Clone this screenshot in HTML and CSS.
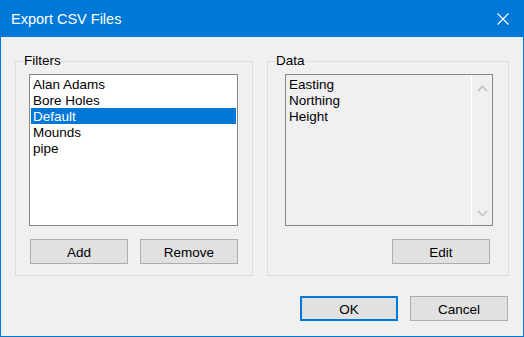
FILE: index.html
```html
<!DOCTYPE html>
<html lang="en">
<head>
    <meta charset="UTF-8">
    <title>Export CSV Files</title>
    <link rel="stylesheet" href="styles.css">
</head>
<body>
    <div class="dialog">
        <div class="titlebar">
            <span class="title">Export CSV Files</span>
            <span class="close">
                <svg width="12" height="12" viewBox="0 0 12 12">
                    <path d="M0.5 0.5 L11.5 11.5 M11.5 0.5 L0.5 11.5" stroke="#fff" stroke-width="1.1" fill="none"/>
                </svg>
            </span>
        </div>
        <div class="content">
            <div class="groups">
                <fieldset class="group filters">
                    <legend>Filters</legend>
                    <div class="group-body">
                        <ul class="listbox">
                            <li>Alan Adams</li>
                            <li>Bore Holes</li>
                            <li class="selected">Default</li>
                            <li>Mounds</li>
                            <li>pipe</li>
                        </ul>
                        <div class="group-buttons">
                            <button class="btn">Add</button>
                            <button class="btn">Remove</button>
                        </div>
                    </div>
                </fieldset>
                <fieldset class="group data">
                    <legend>Data</legend>
                    <div class="group-body">
                        <div class="listbox disabled">
                            <ul class="items">
                                <li>Easting</li>
                                <li>Northing</li>
                                <li>Height</li>
                            </ul>
                            <div class="scrollbar">
                                <svg width="11" height="7" viewBox="0 0 11 7">
                                    <path d="M1 6 L5.5 1.5 L10 6" stroke="#c0c0c0" stroke-width="1.6" fill="none"/>
                                </svg>
                                <svg width="11" height="7" viewBox="0 0 11 7">
                                    <path d="M1 1 L5.5 5.5 L10 1" stroke="#c0c0c0" stroke-width="1.6" fill="none"/>
                                </svg>
                            </div>
                        </div>
                        <div class="group-buttons end">
                            <button class="btn">Edit</button>
                        </div>
                    </div>
                </fieldset>
            </div>
            <div class="footer">
                <button class="btn default">OK</button>
                <button class="btn">Cancel</button>
            </div>
        </div>
    </div>
</body>
</html>
```

FILE: styles.css
```css
* {
    box-sizing: border-box;
}
body {
    margin: 0;
    background: #f0f0f0;
    font-family: 'Liberation Sans', Arial, sans-serif;
    font-size: 13.5px;
    color: #000;
}
.dialog {
    width: 524px;
    height: 337px;
    border: 1px solid #0078d7;
    border-top: none;
    background: #f0f0f0;
    display: flex;
    flex-direction: column;
}
.titlebar {
    height: 37px;
    background: #0078d7;
    color: #fff;
    display: flex;
    align-items: center;
    justify-content: space-between;
    padding: 1px 14px 0 10px;
}
.title {
    font-size: 14.5px;
}
.close {
    display: flex;
}
.content {
    flex: 1;
    display: flex;
    flex-direction: column;
    padding: 16px 14px 15px 14px;
}
.groups {
    display: flex;
    gap: 14px;
}
.group {
    margin: 0;
    min-width: 0;
    border: 1px solid #dcdcdc;
    padding: 5px 14px 11px 7px;
}
.group legend {
    padding: 0 1px;
    line-height: 16px;
}
.filters {
    width: 238px;
}
.filters .group-body {
    padding-left: 6px;
}
.data {
    width: 242px;
}
.data .group-body {
    padding-left: 10px;
}
.listbox {
    list-style: none;
    margin: 0;
    width: 209px;
    height: 152px;
    border: 1px solid #828790;
    background: #fff;
    padding: 1px;
}
.listbox li,
.items li {
    height: 16px;
    line-height: 17px;
    padding-left: 2px;
}
.listbox li.selected {
    background: #0078d7;
    color: #fff;
}
.listbox.disabled {
    width: 208px;
    background: #f0f0f0;
    display: flex;
    padding: 1px 0 0 1px;
}
.items {
    list-style: none;
    margin: 0;
    padding: 0;
    flex: 1;
}
.scrollbar {
    width: 21px;
    border-left: 1px solid #fff;
    margin-top: -1px;
    display: flex;
    flex-direction: column;
    justify-content: space-between;
    align-items: center;
    padding: 10px 0 8px 0;
}
.group-buttons {
    display: flex;
    justify-content: space-between;
    margin-top: 13px;
    padding-left: 1px;
    width: 209px;
}
.group-buttons.end {
    justify-content: flex-end;
    width: 205px;
}
.btn {
    width: 98px;
    height: 25px;
    background: #e1e1e1;
    border: 1px solid #adadad;
    font-family: inherit;
    font-size: 13.5px;
    color: #000;
    padding: 1px 0 0 0;
}
.btn.default {
    border: 2px solid #0078d7;
}
.footer {
    margin-top: auto;
    display: flex;
    justify-content: flex-end;
    gap: 12px;
    padding-right: 1px;
}
```
